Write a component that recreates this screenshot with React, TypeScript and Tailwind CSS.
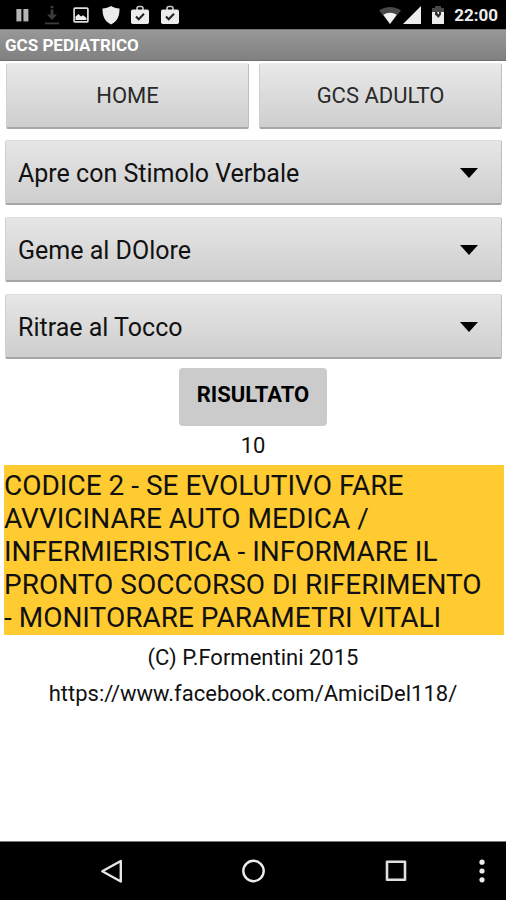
import { useState } from "react";

/* ── Data ─────────────────────────────────────────────────────── */
const FIELDS = [
  { id: "occhi", label: "Apertura occhi", options: ["Apre con Stimolo Verbale"] },
  { id: "verbale", label: "Risposta verbale", options: ["Geme al DOlore"] },
  { id: "motoria", label: "Risposta motoria", options: ["Ritrae al Tocco"] },
];

/* ── Status bar icons ─────────────────────────────────────────── */
function BagIcon() {
  return (
    <svg viewBox="0 0 20 20" className="size-5">
      <path d="M7 6V3.5a2 2 0 0 1 2-2h2a2 2 0 0 1 2 2V6" fill="none" stroke="#c9c9c9" strokeWidth="1.6" />
      <rect x="1" y="4.5" width="18" height="14.5" rx="1.8" fill="#ececec" />
      <path d="m6 11.5 2.7 2.8 5.3-5.6" fill="none" stroke="#222" strokeWidth="2" />
    </svg>
  );
}

function StatusBar() {
  return (
    <div className="flex h-[29px] items-center justify-between bg-black pt-px pr-2 pl-3 text-[#ececec]">
      <div className="flex w-42 items-center justify-between">
        <svg viewBox="0 0 20 20" className="size-5" fill="#b5b5b5">
          <rect x="4.4" y="4" width="5" height="12.4" />
          <rect x="11.4" y="4" width="5" height="12.4" />
        </svg>
        <svg viewBox="0 0 20 20" className="size-5" fill="#3c3c3c">
          <path d="M8.6 1h2.8v2.2H8.6zM8.6 4.4h2.8v5h3.6L10 15 5 9.4h3.6z" />
          <rect x="3" y="17.5" width="14" height="1.8" />
        </svg>
        <svg viewBox="0 0 20 20" className="size-5">
          <rect x="3.1" y="3.1" width="13.8" height="13.8" rx="1" fill="none" stroke="#dcdcdc" strokeWidth="1.7" />
          <path d="M4.5 15v-3.5L7.5 9l2.5 2.5 2-1.3 3.5 2.8v2z" fill="#ececec" />
        </svg>
        <svg viewBox="0 0 20 20" className="size-5" fill="#ececec">
          <path d="M10 1c2.6 1.5 5.2 2.3 8.5 2.5 0 7-1.5 12.5-8.5 15.9C3 16 1.5 10.5 1.5 3.5 4.8 3.3 7.4 2.5 10 1z" />
        </svg>
        <BagIcon />
        <BagIcon />
      </div>

      <div className="flex items-center">
        <svg viewBox="0 0 24 20" className="h-5 w-6">
          <path d="M1 5.5C7.5.8 16.5.8 23 5.5L12 19z" fill="#484848" />
          <path d="M5.3 9.8c4-2.8 9.4-2.8 13.4 0L12 19z" fill="#f2f2f2" />
        </svg>
        <svg viewBox="0 0 20 20" className="size-5" fill="#ececec">
          <path d="M19 1v18H1z" />
        </svg>
        <svg viewBox="0 0 16 20" className="mx-2 h-5 w-4">
          <path d="M5 1h6v2h3v5H2V3h3z" fill="#484848" />
          <path d="M2 7h12v12H2z" fill="#ececec" />
          <path d="M5 7h6v2.5L8.5 13 5 9.5z" fill="#333" />
          <path d="M7 7h2v2H8z" fill="#ececec" />
        </svg>
        <span className="text-[17px] leading-5 font-bold">22:00</span>
      </div>
    </div>
  );
}

/* ── Form controls ────────────────────────────────────────────── */
function TopButton({ children }: { children: string }) {
  return (
    <button
      type="button"
      className="h-[66px] flex-1 rounded-xs border border-t-[#ececec] border-r-[#bdbdbd] border-b-2 border-b-[#a6a6a6] border-l-[#cfcfcf] bg-linear-to-b from-[#e9e9e9] to-[#cecece] text-[22px] text-[#2a2a2a]"
    >
      {children}
    </button>
  );
}

function Spinner({ id, label, options }: { id: string; label: string; options: string[] }) {
  const [value, setValue] = useState(options[0]);

  return (
    <div className="relative">
      <select
        id={id}
        aria-label={label}
        value={value}
        onChange={(e) => setValue(e.target.value)}
        className="block h-[65px] w-full appearance-none rounded-xs border border-t-[#dcdcdc] border-r-[#bdbdbd] border-b-2 border-b-[#a6a6a6] border-l-[#cfcfcf] bg-linear-to-b from-[#e6e6e6] to-[#cecece] pt-[3px] pr-14 pl-3 text-[25px] text-[#111]"
      >
        {options.map((o) => (
          <option key={o}>{o}</option>
        ))}
      </select>
      <svg
        viewBox="0 0 20 10"
        className="pointer-events-none absolute top-7 right-[23px] h-[10px] w-5"
      >
        <path d="M1 0h18l-9 10z" fill="#000" />
      </svg>
    </div>
  );
}

/* ── Bottom navigation ────────────────────────────────────────── */
function NavBar() {
  return (
    <nav className="flex h-[59px] items-center border-t border-[#777] bg-black pl-10">
      <button type="button" aria-label="Indietro" className="flex flex-1 justify-center">
        <svg viewBox="0 0 24 24" className="size-6" fill="none" stroke="#e6e6e6" strokeWidth="2.4" strokeLinejoin="round">
          <path d="M21.8 2v20.5L3.3 12.3z" />
        </svg>
      </button>
      <button type="button" aria-label="Home" className="flex flex-1 justify-center">
        <svg viewBox="0 0 24 24" className="size-6" fill="none" stroke="#ececec" strokeWidth="2.4">
          <circle cx="12.5" cy="12" r="10.2" />
        </svg>
      </button>
      <button type="button" aria-label="Recenti" className="flex flex-1 justify-center">
        <svg viewBox="0 0 24 24" className="size-6" fill="none" stroke="#e0e0e0" strokeWidth="2.6" strokeLinejoin="round">
          <rect x="4" y="2.7" width="18" height="18" />
        </svg>
      </button>
      <button type="button" aria-label="Menu" className="flex w-10 justify-end pr-3">
        <svg viewBox="0 0 24 24" className="size-6" fill="#ececec">
          <circle cx="12" cy="3.2" r="2.6" />
          <circle cx="12" cy="12" r="2.6" />
          <circle cx="12" cy="20.8" r="2.6" />
        </svg>
      </button>
    </nav>
  );
}

export default function App() {
  return (
    <div className="flex min-h-screen flex-col bg-white font-[Roboto,sans-serif] text-[#111]">
      <StatusBar />
      <header className="flex h-8 items-center border-t border-b border-t-[#777] border-b-[#707070] bg-linear-to-b from-[#989898] to-[#808080] pl-[5px]">
        <h1 className="text-[17px] leading-5 font-bold text-white">GCS PEDIATRICO</h1>
      </header>

      <main className="flex flex-1 flex-col pt-[2px]">
        <div className="flex gap-[10px] pr-1 pl-[6px]">
          <TopButton>HOME</TopButton>
          <TopButton>GCS ADULTO</TopButton>
        </div>

        <div className="mt-[11px] flex flex-col gap-3 pr-1 pl-[5px]">
          {FIELDS.map((field) => (
            <Spinner key={field.id} {...field} />
          ))}
        </div>

        <button
          type="button"
          className="mt-[9px] h-[58px] self-center rounded-sm bg-[#cbcbcb] px-[18px] pb-[6px] text-[22px] font-bold text-black"
        >
          RISULTATO
        </button>

        <output className="mt-1 text-center text-[22px] leading-8">10</output>

        <p className="mt-[3px] mr-[2px] ml-1 bg-[#ffcb30] pt-1 pr-3 pb-px text-[28px] leading-[33px]">
          CODICE 2 - SE EVOLUTIVO FARE AVVICINARE AUTO MEDICA / INFERMIERISTICA - INFORMARE IL
          PRONTO SOCCORSO DI RIFERIMENTO - MONITORARE PARAMETRI VITALI
        </p>

        <footer className="mt-[5px] flex flex-col items-center text-[22px] leading-9">
          <p>(C) P.Formentini 2015</p>
          <a href="https://www.facebook.com/AmiciDel118/">https://www.facebook.com/AmiciDel118/</a>
        </footer>
      </main>

      <NavBar />
    </div>
  );
}
